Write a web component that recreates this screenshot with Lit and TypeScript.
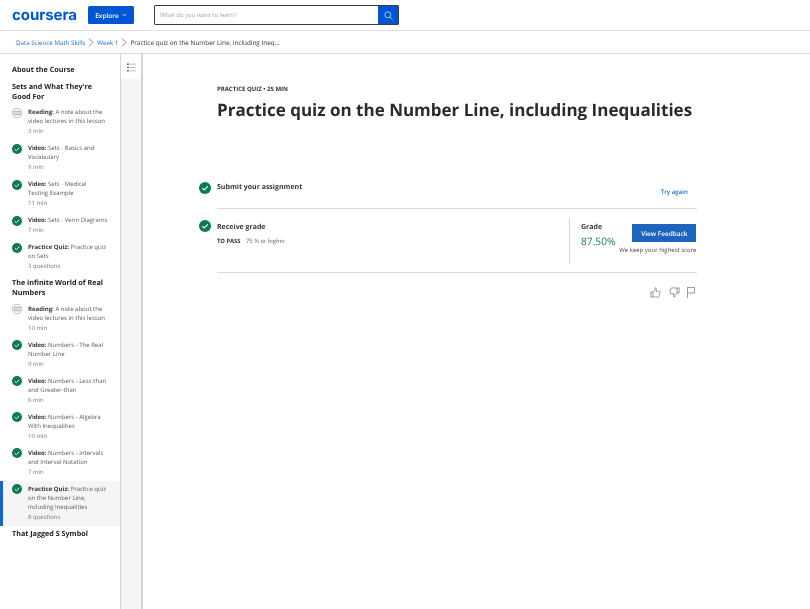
import { LitElement, html, css } from "lit";
import { customElement } from "lit/decorators.js";

type Item = { kind: "reading" | "done"; label: string; text: string; meta: string; active?: boolean };
type Group = { title: string; items: Item[] };

const groups: Group[] = [
  { title: "About the Course", items: [] },
  {
    title: "Sets and What They're Good For",
    items: [
      { kind: "reading", label: "Reading:", text: "A note about the video lectures in this lesson", meta: "3 min" },
      { kind: "done", label: "Video:", text: "Sets - Basics and Vocabulary", meta: "9 min" },
      { kind: "done", label: "Video:", text: "Sets - Medical Testing Example", meta: "11 min" },
      { kind: "done", label: "Video:", text: "Sets - Venn Diagrams", meta: "7 min" },
      { kind: "done", label: "Practice Quiz:", text: "Practice quiz on Sets", meta: "3 questions" },
    ],
  },
  {
    title: "The infinite World of Real Numbers",
    items: [
      { kind: "reading", label: "Reading:", text: "A note about the video lectures in this lesson", meta: "10 min" },
      { kind: "done", label: "Video:", text: "Numbers - The Real Number Line", meta: "9 min" },
      { kind: "done", label: "Video:", text: "Numbers - Less-than and Greater-than", meta: "6 min" },
      { kind: "done", label: "Video:", text: "Numbers - Algebra With Inequalities", meta: "10 min" },
      { kind: "done", label: "Video:", text: "Numbers - Intervals and Interval Notation", meta: "7 min" },
      { kind: "done", label: "Practice Quiz:", text: "Practice quiz on the Number Line, including Inequalities", meta: "8 questions", active: true },
    ],
  },
  { title: "That Jagged S Symbol", items: [] },
];

const check = (size: number) => html`<svg class="ic" width=${size} height=${size} viewBox="0 0 12 12">
  <circle cx="6" cy="6" r="6" fill="#0b7a4f"></circle>
  <path d="M3.3 6.2 5.2 8 8.8 4.4" fill="none" stroke="#fff" stroke-width="1.1"></path>
</svg>`;

const reading = html`<svg class="ic" width="10" height="10" viewBox="0 0 10 10" fill="none" stroke="#666" stroke-width=".45">
  <circle cx="5" cy="5" r="4.7"></circle>
  <path d="M2.2 3.2h5.6v3.6H2.2zM4 3.2v3.6M6 3.2v3.6"></path>
</svg>`;

@customElement("app-root")
export class AppRoot extends LitElement {
  static styles = css`
    :host { display: block; width: 810px; height: 609px; overflow: hidden; background: #fff; color: #1f1f1f; font-family: "Open Sans", sans-serif; text-rendering: geometricPrecision; }
    .top, .crumbs, .side, .main { will-change: transform; }
    .top { height: 30px; display: flex; align-items: center; padding-left: 12px; border-bottom: 1px solid #e1e1e1; }
    .logo { width: 64px; color: #0056d2; font: 700 15px/18px Inter, sans-serif; letter-spacing: -.05px; }
    .explore { margin-left: 12px; width: 46px; height: 18px; border-radius: 1.5px; background: #0056d2; color: #fff; font-size: 6.5px; font-weight: 600; display: flex; align-items: center; justify-content: center; gap: 3px; }
    .search { margin-left: 20px; width: 245px; height: 20px; box-sizing: border-box; border: 1px solid #3c3c3c; border-radius: 1px; display: flex; }
    .search span { flex: 1; padding-left: 5px; font-size: 6px; line-height: 18px; color: #a5a5a5; }
    .search i { width: 20px; background: #0056d2; display: flex; align-items: center; justify-content: center; }
    .crumbs { height: 22px; display: flex; align-items: center; padding-left: 16px; border-bottom: 1px solid #d9d9d9; font-size: 6.2px; color: #333; }
    .crumbs a { color: #1f6fd1; }
    .crumbs svg { margin: 0 3px; }
    .crumbs span { font-size: 6.4px; }
    .body { display: flex; height: 555px; }
    .side { width: 121px; flex: none; box-sizing: border-box; border-right: 1px solid #d5d5d5; padding-top: 11px; }
    .sec { margin: 0 0 3px; padding: 0 12px; font-size: 7.2px; font-weight: 700; line-height: 10px; color: #222; }
    .grp:nth-child(2) .sec { margin-top: 6.5px; }
    .grp:nth-child(3) .sec { margin-top: 2.5px; }
    .grp:nth-child(4) .sec { margin-top: 2.5px; }
    .item { display: flex; padding: 3.5px 0 4.5px 12px; box-sizing: border-box; }
    .item.active { background: #f5f5f5; border-left: 3px solid #1d64bf; padding-left: 9px; }
    .ic { flex: none; }
    .item .ic { margin-top: -.5px; }
    .txt { margin-left: 6px; width: 79.8px; font-size: 6px; line-height: 9px; color: #5c5c5c; }
    .txt b { font-weight: 700; color: #373737; }
    .meta { margin-top: 1px; color: #7a7a7a; }
    .strip { width: 20px; flex: none; background: #f5f5f5; border-right: 2px solid #d5d5d5; }
    .strip div { height: 25px; background: #fff; display: flex; justify-content: center; padding-top: 9px; box-sizing: border-box; }
    .main { flex: 1; padding: 31px 0 0 56px; }
    .wrap { width: 498px; }
    .head { padding-left: 18px; }
    .eyebrow { font-size: 6px; font-weight: 700; line-height: 9px; color: #333; }
    h1 { margin: 2px 0 0; font-size: 17px; line-height: 28px; font-weight: 700; color: #2a2a2a; white-space: nowrap; }
    .submit { margin-top: 58px; display: flex; gap: 6px; height: 26px; }
    .submit .t, .rt { font-size: 7px; font-weight: 700; line-height: 10px; color: #373737; }
    .submit .t { flex: 1; margin-top: 1px; }
    .submit a { margin: 5px 9px 0 0; font-size: 6.2px; line-height: 10px; font-weight: 600; color: #1f6fd1; }
    .grade { margin-left: 18px; width: 480px; border-top: 1px solid #d9d9d9; border-bottom: 1px solid #d9d9d9; height: 65px; box-sizing: border-box; display: flex; position: relative; }
    .left { flex: 1; padding-top: 14px; }
    .grade > .ic { position: absolute; left: -18px; top: 11px; }
    .pass { margin-top: 4px; font-size: 5.8px; line-height: 9px; color: #666; }
    .pass b { color: #333; margin-right: 4px; }
    .right { width: 128px; margin: 9px 0 8px; border-left: 1px solid #d5d5d5; padding: 5px 0 0 11px; box-sizing: border-box; display: flex; }
    .score { font-size: 10.2px; line-height: 14px; color: #1f8354; margin-top: 1px; }
    .cta { margin-left: 17px; display: flex; flex-direction: column; align-items: flex-end; width: 64px; margin-top: 1px; }
    .cta span { height: 18px; width: 64px; flex: none; background: #1d64bf; color: #fff; font-size: 6.5px; font-weight: 600; display: flex; align-items: center; justify-content: center; }
    .cta small { margin-top: 4px; font-size: 6px; line-height: 9px; color: #444; white-space: nowrap; }
    .acts { margin: 14px 0 0 18px; width: 480px; display: flex; justify-content: flex-end; gap: 8px; padding-right: 2px; box-sizing: border-box; }
    .acts .flag { margin-left: -1px; }
  `;

  render() {
    const chev = html`<svg width="6" height="9" viewBox="0 0 6 9" fill="none" stroke="#555" stroke-width=".7"><path d="M1 .5 5 4.5 1 8.5"></path></svg>`;
    return html`
      <div class="top">
        <span class="logo">coursera</span>
        <span class="explore">Explore <svg width="5" height="4" viewBox="0 0 5 4" fill="none" stroke="#fff" stroke-width=".7"><path d="M.5 1 2.5 3 4.5 1"></path></svg></span>
        <div class="search">
          <span>What do you want to learn?</span>
          <i><svg width="9" height="9" viewBox="0 0 9 9" fill="none" stroke="#cfe0f7" stroke-width=".8"><circle cx="3.8" cy="3.8" r="3"></circle><path d="M6 6 8.5 8.5"></path></svg></i>
        </div>
      </div>
      <div class="crumbs"><a>Data Science Math Skills</a>${chev}<a>Week 1</a>${chev}<span>Practice quiz on the Number Line, including Ineq…</span></div>
      <div class="body">
        <nav class="side">
          ${groups.map((g) => html`<div class="grp">
            <h3 class="sec">${g.title}</h3>
            ${g.items.map((i) => html`<div class="item ${i.active ? "active" : ""}">
              ${i.kind === "done" ? check(10) : reading}
              <div class="txt"><b>${i.label}</b> ${i.text}<div class="meta">${i.meta}</div></div>
            </div>`)}
          </div>`)}
        </nav>
        <div class="strip"><div><svg width="9" height="9" viewBox="0 0 9 9"><path d="M0 1.2h2M0 4.5h2M0 7.8h2" stroke="#555" stroke-width="1.2"></path><path d="M3 1.2h6M3 4.5h6M3 7.8h6" stroke="#999" stroke-width=".6"></path></svg></div></div>
        <main class="main">
          <div class="wrap">
            <div class="head">
              <div class="eyebrow">PRACTICE QUIZ • 25 MIN</div>
              <h1>Practice quiz on the Number Line, including Inequalities</h1>
            </div>
            <div class="submit">${check(12)}<div class="t">Submit your assignment</div><a>Try again</a></div>
            <div class="grade">
              ${check(12)}
              <div class="left">
                <div class="rt">Receive grade</div>
                <div class="pass"><b>TO PASS</b> 75 % or higher</div>
              </div>
              <div class="right">
                <div><div class="rt">Grade</div><div class="score">87.50%</div></div>
                <div class="cta"><span>View Feedback</span><small>We keep your highest score</small></div>
              </div>
            </div>
            <div class="acts">
              <svg width="11" height="11" viewBox="0 0 12 12" fill="none" stroke="#666" stroke-width=".7"><path d="M1 5.5h2.2V11H1zM3.2 5.8 5.6 3V.9c1.2 0 1.6 1 1.4 2L6.6 4.6h3.6c.7 0 1 .6.8 1.2l-1 4.3c-.1.5-.5.9-1 .9H5c-.8 0-1.2-.4-1.8-.6"></path></svg>
              <svg width="11" height="11" viewBox="0 0 12 12" fill="none" stroke="#666" stroke-width=".7"><path d="M11 6.5H8.8V1H11zM8.8 6.2 6.4 9v2.1C5.2 11.1 4.8 10 5 9l.4-1.6H1.8c-.7 0-1-.6-.8-1.2l1-4.3c.1-.5.5-.9 1-.9H7c.8 0 1.2.4 1.8.6"></path></svg>
              <svg class="flag" width="8" height="11" viewBox="0 0 8 11" fill="none" stroke="#666" stroke-width=".7"><path d="M.4 11V.4H7.6V6H.4"></path></svg>
            </div>
          </div>
        </main>
      </div>
    `;
  }
}
